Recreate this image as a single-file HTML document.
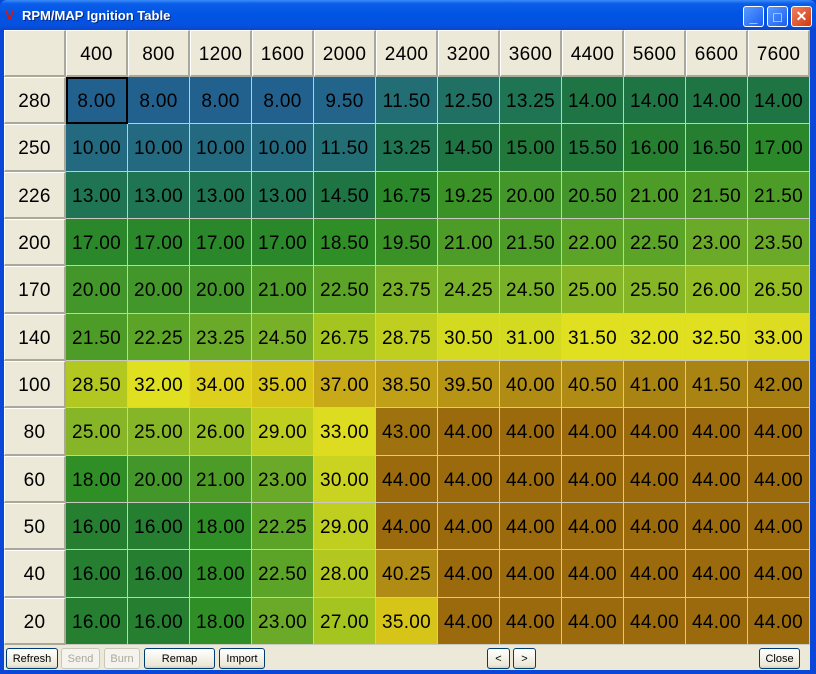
<!DOCTYPE html>
<html><head><meta charset="utf-8"><style>
*{box-sizing:border-box;margin:0;padding:0}
body{width:816px;height:674px;overflow:hidden;background:#0a46d8;font-family:"Liberation Sans",Arial,sans-serif;position:relative}
.tb{position:absolute;left:0;top:0;width:816px;height:30px;border-radius:7px 7px 0 0;background:linear-gradient(#3c8cf8 0,#0a5ee8 12%,#0054e3 50%,#0650e0 85%,#0a46c8 100%)}
.tt{position:absolute;left:22px;top:8px;color:#fff;font-weight:bold;font-size:13px;text-shadow:1px 1px #0a2a80}
.ic{position:absolute;left:5px;top:7px;font-size:14px;font-weight:bold;color:#d01818}
.wb{position:absolute;top:6px;width:21px;height:21px;border:1px solid #fff;border-radius:3px;background:linear-gradient(135deg,#5a9cff,#1a5ef0);color:#fff;font-weight:bold;font-size:14px;display:flex;align-items:center;justify-content:center}
.wb.x{background:linear-gradient(135deg,#f08060,#d03a10)}
.frame{position:absolute;left:4px;top:30px;width:806px;height:640px;background:#ece9d8}
.grid{position:absolute;left:4px;top:30px;display:grid;grid-template-columns:repeat(13,62px);grid-template-rows:47px repeat(12,47.33px)}
.grid div{display:flex;align-items:center;justify-content:center;font-size:19px;color:#000;border-right:1px solid #c9c9bf;border-bottom:1px solid #c9c9bf;padding-top:4px;letter-spacing:0.3px}
.grid .h{background:#ece9d8;border-right:2px solid #aca899;border-bottom:2px solid #aca899;border-top:1px solid #fff;border-left:1px solid #fff}
.sel{outline:2px solid #000;outline-offset:-2px}
.bt{position:absolute;top:648px;height:21px;border:1px solid #003c74;border-radius:3px;background:linear-gradient(#fff,#ece9d8 85%,#d6d0c0);font-size:11px;display:flex;align-items:center;justify-content:center;color:#000}
.bt.d{border-color:#c9c7ba;color:#aca899;background:#f4f3ee}
.a{background:#22608e}.b9{background:#23648a}.b10{background:#236a80}.b11{background:#226e74}.b12{background:#217064}.b13{background:#1f7454}.b14{background:#1f7444}.b15{background:#22783a}.b16{background:#267e30}.b17{background:#2a882a}.b18{background:#308e26}.b19{background:#3a9226}.b20{background:#42962a}.b21{background:#4e9c28}.b22{background:#5ca428}.b23{background:#6aaa28}.b24{background:#78b028}.b25{background:#86b628}.b26{background:#94bc24}.b27{background:#a4c420}.b28{background:#b2c820}.b29{background:#c0ce20}.b30{background:#cad420}.b31{background:#d4da20}.b32{background:#e0e020}.b33{background:#dedc20}.b34{background:#dcd01c}.b35{background:#d6c418}.b37{background:#c8aa18}.b38{background:#c0a016}.b39{background:#b89414}.b40{background:#b08c14}.b41{background:#aa8412}.b42{background:#a47c10}.b43{background:#9e720e}.b44{background:#9a6a0c}
</style></head><body>
<div class="tb"><span class="ic">V</span><span class="tt">RPM/MAP Ignition Table</span>
<div class="wb" style="left:743px">_</div><div class="wb" style="left:767px">□</div><div class="wb x" style="left:791px">✕</div></div>
<div class="frame"></div>
<div class="grid">
<div class="h"></div><div class="h">400</div><div class="h">800</div><div class="h">1200</div><div class="h">1600</div><div class="h">2000</div><div class="h">2400</div><div class="h">3200</div><div class="h">3600</div><div class="h">4400</div><div class="h">5600</div><div class="h">6600</div><div class="h">7600</div>
<div class="h">280</div><div class="a sel">8.00</div><div class="a">8.00</div><div class="a">8.00</div><div class="a">8.00</div><div class="b9">9.50</div><div class="b11">11.50</div><div class="b12">12.50</div><div class="b13">13.25</div><div class="b14">14.00</div><div class="b14">14.00</div><div class="b14">14.00</div><div class="b14">14.00</div>
<div class="h">250</div><div class="b10">10.00</div><div class="b10">10.00</div><div class="b10">10.00</div><div class="b10">10.00</div><div class="b11">11.50</div><div class="b13">13.25</div><div class="b14">14.50</div><div class="b15">15.00</div><div class="b15">15.50</div><div class="b16">16.00</div><div class="b16">16.50</div><div class="b17">17.00</div>
<div class="h">226</div><div class="b13">13.00</div><div class="b13">13.00</div><div class="b13">13.00</div><div class="b13">13.00</div><div class="b14">14.50</div><div class="b17">16.75</div><div class="b19">19.25</div><div class="b20">20.00</div><div class="b20">20.50</div><div class="b21">21.00</div><div class="b21">21.50</div><div class="b21">21.50</div>
<div class="h">200</div><div class="b17">17.00</div><div class="b17">17.00</div><div class="b17">17.00</div><div class="b17">17.00</div><div class="b18">18.50</div><div class="b19">19.50</div><div class="b21">21.00</div><div class="b21">21.50</div><div class="b22">22.00</div><div class="b22">22.50</div><div class="b23">23.00</div><div class="b23">23.50</div>
<div class="h">170</div><div class="b20">20.00</div><div class="b20">20.00</div><div class="b20">20.00</div><div class="b21">21.00</div><div class="b22">22.50</div><div class="b24">23.75</div><div class="b24">24.25</div><div class="b24">24.50</div><div class="b25">25.00</div><div class="b25">25.50</div><div class="b26">26.00</div><div class="b26">26.50</div>
<div class="h">140</div><div class="b21">21.50</div><div class="b22">22.25</div><div class="b23">23.25</div><div class="b24">24.50</div><div class="b27">26.75</div><div class="b29">28.75</div><div class="b31">30.50</div><div class="b31">31.00</div><div class="b32">31.50</div><div class="b32">32.00</div><div class="b32">32.50</div><div class="b33">33.00</div>
<div class="h">100</div><div class="b28">28.50</div><div class="b32">32.00</div><div class="b34">34.00</div><div class="b35">35.00</div><div class="b37">37.00</div><div class="b38">38.50</div><div class="b39">39.50</div><div class="b40">40.00</div><div class="b40">40.50</div><div class="b41">41.00</div><div class="b41">41.50</div><div class="b42">42.00</div>
<div class="h">80</div><div class="b25">25.00</div><div class="b25">25.00</div><div class="b26">26.00</div><div class="b29">29.00</div><div class="b33">33.00</div><div class="b43">43.00</div><div class="b44">44.00</div><div class="b44">44.00</div><div class="b44">44.00</div><div class="b44">44.00</div><div class="b44">44.00</div><div class="b44">44.00</div>
<div class="h">60</div><div class="b18">18.00</div><div class="b20">20.00</div><div class="b21">21.00</div><div class="b23">23.00</div><div class="b30">30.00</div><div class="b44">44.00</div><div class="b44">44.00</div><div class="b44">44.00</div><div class="b44">44.00</div><div class="b44">44.00</div><div class="b44">44.00</div><div class="b44">44.00</div>
<div class="h">50</div><div class="b16">16.00</div><div class="b16">16.00</div><div class="b18">18.00</div><div class="b22">22.25</div><div class="b29">29.00</div><div class="b44">44.00</div><div class="b44">44.00</div><div class="b44">44.00</div><div class="b44">44.00</div><div class="b44">44.00</div><div class="b44">44.00</div><div class="b44">44.00</div>
<div class="h">40</div><div class="b16">16.00</div><div class="b16">16.00</div><div class="b18">18.00</div><div class="b22">22.50</div><div class="b28">28.00</div><div class="b40">40.25</div><div class="b44">44.00</div><div class="b44">44.00</div><div class="b44">44.00</div><div class="b44">44.00</div><div class="b44">44.00</div><div class="b44">44.00</div>
<div class="h">20</div><div class="b16">16.00</div><div class="b16">16.00</div><div class="b18">18.00</div><div class="b23">23.00</div><div class="b27">27.00</div><div class="b35">35.00</div><div class="b44">44.00</div><div class="b44">44.00</div><div class="b44">44.00</div><div class="b44">44.00</div><div class="b44">44.00</div><div class="b44">44.00</div>
</div>
<div class="bt" style="left:6px;width:52px">Refresh</div>
<div class="bt d" style="left:61px;width:39px">Send</div>
<div class="bt d" style="left:104px;width:36px">Burn</div>
<div class="bt" style="left:144px;width:71px">Remap</div>
<div class="bt" style="left:219px;width:46px">Import</div>
<div class="bt" style="left:487px;width:23px">&lt;</div>
<div class="bt" style="left:513px;width:23px">&gt;</div>
<div class="bt" style="left:759px;width:41px">Close</div>
</body></html>
